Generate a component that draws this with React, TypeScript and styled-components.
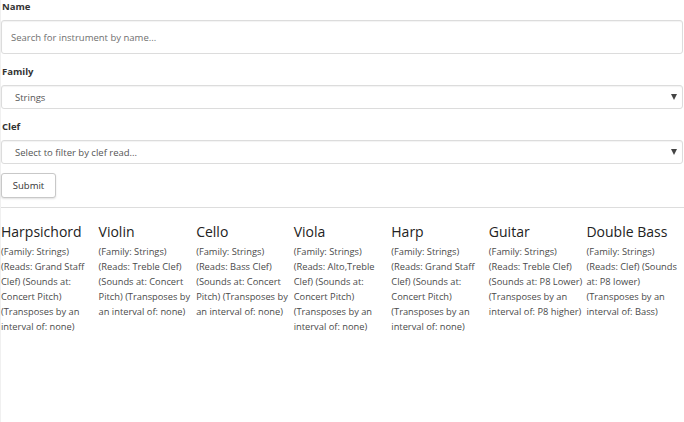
import React from "react";
import styled, { createGlobalStyle } from "styled-components";

const Global = createGlobalStyle`
  html, body { margin: 0; padding: 0; background: #fff; }
  body { font-family: "Open Sans", "Noto Sans", sans-serif; color: #333; }
  * { box-sizing: border-box; }
`;

const Page = styled.div`
  min-height: 422px;
  border-left: 1px solid #f0f0f0;
`;

const Form = styled.form`
  display: flex;
  flex-direction: column;
  padding-top: 1px;
`;

const Label = styled.label`
  display: block;
  font-size: 9.5px;
  font-weight: 700;
  color: #333;
  line-height: 12px;
  padding-left: 1px;
  margin-bottom: 7px;
`;

const Group = styled.div<{ $gap: number }>`
  margin-bottom: ${(p) => p.$gap}px;
`;

const TextInput = styled.input`
  display: block;
  width: calc(100% - 1px);
  height: 34px;
  border: 1px solid #dcdcdc;
  border-radius: 3px;
  box-shadow: inset 0 1px 1px rgba(0, 0, 0, 0.05);
  padding: 0 9px;
  font-family: "Open Sans", sans-serif;
  font-size: 9.5px;
  color: #555;
  &::placeholder { color: #6f6f6f; }
`;

const SelectBox = styled.div`
  position: relative;
  width: calc(100% - 1px);
  height: 24px;
  border: 1px solid #dcdcdc;
  border-radius: 3px;
  box-shadow: inset 0 1px 1px rgba(0, 0, 0, 0.05);
  display: flex;
  align-items: center;
  padding: 0 13px;
  font-size: 9.5px;
  color: #555;
`;

const Arrow = styled.span`
  position: absolute;
  right: 5px;
  top: 50%;
  transform: translateY(-50%);
  width: 0;
  height: 0;
  border-left: 3.5px solid transparent;
  border-right: 3.5px solid transparent;
  border-top: 6px solid #444;
`;

const Button = styled.button`
  align-self: flex-start;
  width: 55px;
  height: 25px;
  background: #fff;
  border: 1px solid #c8c8c8;
  border-radius: 3px;
  box-shadow: 0 1px 2px rgba(0, 0, 0, 0.12);
  font-family: "Open Sans", sans-serif;
  font-size: 9.5px;
  color: #333;
  padding: 0;
`;

const Rule = styled.hr`
  border: 0;
  border-top: 1px solid #ddd;
  margin: 9px 0 0 0;
`;

const Grid = styled.div`
  display: grid;
  grid-template-columns: repeat(7, 1fr);
  padding-top: 14px;
`;

const Card = styled.div`
  padding-right: 2px;
`;

const Title = styled.h3`
  margin: 0 0 2px 0;
  font-family: "Open Sans", sans-serif;
  font-weight: 400;
  font-size: 14px;
  line-height: 20px;
  color: #222;
  white-space: nowrap;
`;

const Info = styled.p`
  margin: 0;
  font-size: 9.3px;
  line-height: 15px;
  color: #4a4a4a;
`;

const instruments = [
  { name: "Harpsichord", text: "(Family: Strings) (Reads: Grand Staff Clef) (Sounds at: Concert Pitch) (Transposes by an interval of: none)" },
  { name: "Violin", text: "(Family: Strings) (Reads: Treble Clef) (Sounds at: Concert Pitch) (Transposes by an interval of: none)" },
  { name: "Cello", text: "(Family: Strings) (Reads: Bass Clef) (Sounds at: Concert Pitch) (Transposes by an interval of: none)" },
  { name: "Viola", text: "(Family: Strings) (Reads: Alto,Treble Clef) (Sounds at: Concert Pitch) (Transposes by an interval of: none)" },
  { name: "Harp", text: "(Family: Strings) (Reads: Grand Staff Clef) (Sounds at: Concert Pitch) (Transposes by an interval of: none)" },
  { name: "Guitar", text: "(Family: Strings) (Reads: Treble Clef) (Sounds at: P8 Lower) (Transposes by an interval of: P8 higher)" },
  { name: "Double Bass", text: "(Family: Strings) (Reads: Clef) (Sounds at: P8 lower) (Transposes by an interval of: Bass)" },
];

export default function App() {
  return (
    <Page>
      <Global />
      <Form onSubmit={(e) => e.preventDefault()}>
        <Group $gap={12}>
          <Label>Name</Label>
          <TextInput placeholder="Search for instrument by name..." />
        </Group>
        <Group $gap={12}>
          <Label>Family</Label>
          <SelectBox>
            Strings
            <Arrow />
          </SelectBox>
        </Group>
        <Group $gap={9}>
          <Label>Clef</Label>
          <SelectBox>
            Select to filter by clef read...
            <Arrow />
          </SelectBox>
        </Group>
        <Button type="submit">Submit</Button>
      </Form>
      <Rule />
      <Grid>
        {instruments.map((i) => (
          <Card key={i.name}>
            <Title>{i.name}</Title>
            <Info>{i.text}</Info>
          </Card>
        ))}
      </Grid>
    </Page>
  );
}
